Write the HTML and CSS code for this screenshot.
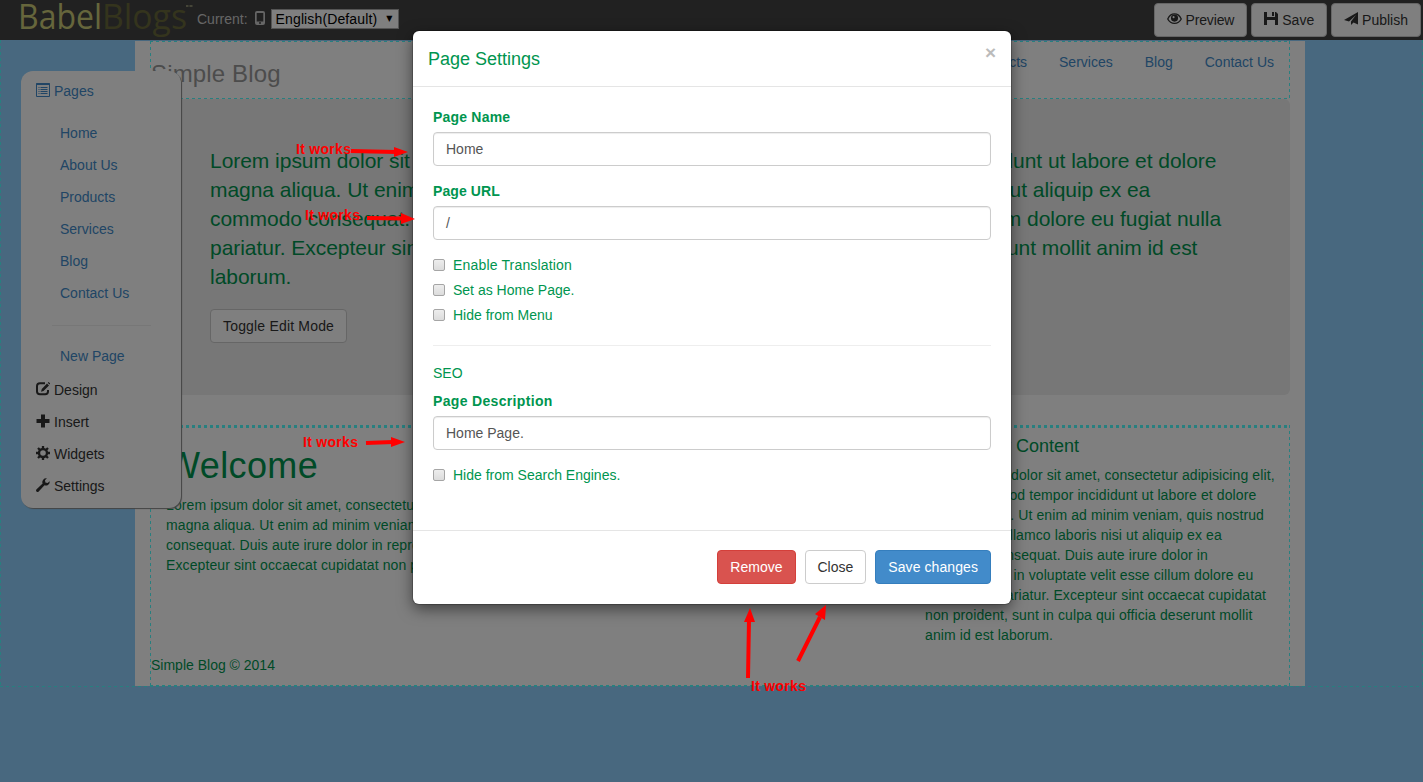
FILE: index.html
```html
<!DOCTYPE html>
<html lang="en">
<head>
<meta charset="utf-8">
<title>BabelBlogs</title>
<link rel="stylesheet" href="styles.css">
</head>
<body>
<header class="topbar">
  <svg class="logo" width="176" height="40" viewBox="0 0 176 40">
    <text class="logo-a" x="-2" y="29" textLength="84" lengthAdjust="spacingAndGlyphs">Babel</text>
    <text class="logo-b" x="82" y="29" textLength="85" lengthAdjust="spacingAndGlyphs">Blogs</text>
    <path d="M166 6h2.500M169.500 6h3" stroke="#8a8a70" stroke-width="2"/>
  </svg>
  <span class="current">Current:</span>
  <svg class="phone" width="10" height="14" viewBox="0 0 10 14"><path fill="#ccc" fill-rule="evenodd" d="M2 0h6a2 2 0 0 1 2 2v10a2 2 0 0 1-2 2H2a2 2 0 0 1-2-2V2a2 2 0 0 1 2-2zM1.700 2v8.500h6.600V2zM4 11.300v1.400h2v-1.400z"/></svg>
  <div class="lang">English(Default)<span class="caret">▼</span></div>
  <div class="actions">
    <a class="btn preview"><svg width="15" height="14" viewBox="0 0 16 14"><path d="M.8 7C4-.2 12-.2 15.200 7 12 13.200 4 13.200.8 7z" fill="none" stroke="#333" stroke-width="1.400"/><circle cx="8" cy="6" r="3.800" fill="#333"/><circle cx="7" cy="5" r="1.100" fill="#fff"/></svg> Preview</a>
    <a class="btn"><svg width="14" height="14" viewBox="0 0 14 14"><path fill="#333" d="M0 0h3v5h8V0h1l2 2v11h-3V8H3v5H0zM8 0h2v4H8z"/></svg> Save</a>
    <a class="btn"><svg width="14" height="14" viewBox="0 0 14 14"><path fill="#333" fill-rule="evenodd" d="M14 0v12.500L9.500 10.500 7 13V9.500L12 3 5 9.500 0 8z"/></svg> Publish</a>
  </div>
</header>

<main class="page">
  <div class="container">
    <div class="site-head dashed">
      <div class="brand">Simple Blog</div>
      <nav class="nav"><a>Home</a><a>About Us</a><a>Products</a><a>Services</a><a>Blog</a><a>Contact Us</a></nav>
    </div>
    <section class="jumbo">
      <p>Lorem ipsum dolor sit amet, consectetur adipisicing elit, sed do eiusmod tempor incididunt ut labore et dolore<br>magna aliqua. Ut enim ad minim veniam, quis nostrud exercitation ullamco laboris nisi ut aliquip ex ea<br>commodo consequat. Duis aute irure dolor in reprehenderit in voluptate velit esse cillum dolore eu fugiat nulla<br>pariatur. Excepteur sint occaecat cupidatat non proident, sunt in culpa qui officia deserunt mollit anim id est<br>laborum.</p>
      <a class="btn">Toggle Edit Mode</a>
    </section>
    <section class="content dashed">
      <div class="columns">
        <article class="col-main">
          <h1>Welcome</h1>
          <p>Lorem ipsum dolor sit amet, consectetur adipisicing elit, sed do eiusmod tempor incididunt ut labore et dolore<br>magna aliqua. Ut enim ad minim veniam, quis nostrud exercitation ullamco laboris nisi ut aliquip ex ea commodo<br>consequat. Duis aute irure dolor in reprehenderit in voluptate velit esse cillum dolore eu fugiat nulla pariatur.<br>Excepteur sint occaecat cupidatat non proident, sunt in culpa qui officia deserunt mollit anim id est laborum.</p>
        </article>
        <aside class="col-side">
          <h4>Secondary Content</h4>
          <p>Lorem ipsum dolor sit amet, consectetur adipisicing elit,<br>sed do eiusmod tempor incididunt ut labore et dolore<br>magna aliqua. Ut enim ad minim veniam, quis nostrud<br>exercitation ullamco laboris nisi ut aliquip ex ea<br>commodo consequat. Duis aute irure dolor in<br>reprehenderit in voluptate velit esse cillum dolore eu<br>fugiat nulla pariatur. Excepteur sint occaecat cupidatat<br>non proident, sunt in culpa qui officia deserunt mollit<br>anim id est laborum.</p>
        </aside>
      </div>
      <footer>Simple Blog © 2014</footer>
    </section>
  </div>
</main>

<aside class="panel">
  <a class="item link"><svg width="14" height="14" viewBox="0 0 14 14"><path d="M.5 .5h13v13H.5z" fill="none" stroke="#428bca"/><path d="M.5 1h13" stroke="#428bca" stroke-width="2"/><path d="M2.500 4.500h1m1 0h7m-9 2h1m1 0h7m-9 2h1m1 0h7m-9 2h1m1 0h7" stroke="#428bca"/></svg>Pages</a>
  <div class="sub">
    <a>Home</a><a>About Us</a><a>Products</a><a>Services</a><a>Blog</a><a>Contact Us</a>
  </div>
  <hr>
  <div class="sub new"><a>New Page</a></div>
  <a class="item"><svg width="14" height="14" viewBox="0 0 14 14"><path d="M9 1.200H4Q1 1.200 1 4v5.500q0 2.700 3 2.700h5.200q2.800 0 2.800-2.700V8" fill="none" stroke="#333" stroke-width="2"/><path fill="#333" d="M11 1.500l2 2L7.500 9 5 9.800 5.800 7zM11.800.8l.8-.8 1.600 1.500-.8.900z"/></svg>Design</a>
  <a class="item"><svg width="14" height="14" viewBox="0 0 14 14"><path fill="#333" d="M5 .5h4V5h4.500v4H9v4.500H5V9H.5V5H5z"/></svg>Insert</a>
  <a class="item"><svg width="14" height="14" viewBox="0 0 14 14"><circle cx="7" cy="7" r="4" fill="none" stroke="#333" stroke-width="2.400"/><path d="M7 0v2.500M7 11.500V14M0 7h2.500M11.500 7H14M2 2l2 2M10 10l2 2M12 2l-2 2M4 10l-2 2" stroke="#333" stroke-width="2.300"/></svg>Widgets</a>
  <a class="item"><svg width="14" height="14" viewBox="0 0 14 14"><path fill="#333" d="M13.700 3.200A3.900 3.900 0 0 1 8.500 7.300L2.700 13.400Q1.500 14.400.5 13.400T.6 11.300L6.600 5.600A3.900 3.900 0 0 1 10.900.3L9 2.300l.4 2.200 2.200.5z"/></svg>Settings</a>
</aside>

<div class="backdrop">
  <div class="modal">
    <div class="modal-head"><h4>Page Settings</h4><span class="x">×</span></div>
    <div class="modal-body">
      <label>Page Name</label>
      <div class="input">Home</div>
      <label class="tight">Page URL</label>
      <div class="input">/</div>
      <div class="check wide"><i></i>Enable Translation</div>
      <div class="check"><i></i>Set as Home Page.</div>
      <div class="check"><i></i>Hide from Menu</div>
      <hr>
      <div class="seo">SEO</div>
      <label class="loose">Page Description</label>
      <div class="input">Home Page.</div>
      <div class="check"><i></i>Hide from Search Engines.</div>
    </div>
    <div class="modal-foot">
      <a class="btn danger">Remove</a><a class="btn">Close</a><a class="btn primary">Save changes</a>
    </div>
  </div>
</div>

<svg class="notes" width="1423" height="782" viewBox="0 0 1423 782">
  <g stroke="#f00" stroke-width="4">
    <path d="M351 151L396 152M367 218L403 218.500M366 443L393 442M748 678L749 620M798 661L820 617"/>
  </g>
  <path fill="#f00" d="M394 147l14 5-14 5zM401 213l14 6-14 5zM391 437l14 5-14 5zM744 622l6-14 5 14zM815 614l11-9-1 15z"/>
  <g class="note">
    <text x="296" y="154" textLength="55">It works</text>
    <text x="305" y="220" textLength="55">It works</text>
    <text x="303" y="447" textLength="55">It works</text>
    <text x="751" y="691" textLength="55">It works</text>
  </g>
</svg>
</body>
</html>
```

FILE: styles.css
```css
* { box-sizing: border-box; }
body {
  margin: 0;
  height: 782px;
  overflow: hidden;
  background: #90d0fe;
  color: #00954f;
  font: 14px/20px "Liberation Sans", Arial, sans-serif;
}
h1, h4, p { margin: 0; font-weight: 400; }
hr { margin: 0; border: 0; border-top: 1px solid #eee; }

.topbar {
  height: 40px;
  padding: 0 2px 0 20px;
  display: flex;
  align-items: flex-start;
  background: #424242;
}
.logo { flex: none; font: 400 34px "Open Sans", sans-serif; overflow: visible; }
.logo-a { fill: #cccc78; }
.logo-b { fill: #68683a; }
.current { margin: 9px 7px 0 1px; color: #ccc; }
.phone { margin: 11px 6px 0 0; }
.lang {
  width: 128px;
  height: 20px;
  margin-top: 9px;
  padding-left: 4px;
  border: 1px solid #a9a9a9;
  background: #fff;
  color: #000;
  line-height: 19px;
  letter-spacing: .13px;
  display: flex;
  justify-content: space-between;
}
.caret { margin-right: 5px; font: 8px/18px "DejaVu Sans", sans-serif; }
.actions { margin: 3px 0 0 auto; display: flex; gap: 4px; }
.actions svg { margin-bottom: -1px; }
.preview { letter-spacing: -.12px; }

.btn {
  display: inline-block;
  height: 34px;
  padding: 6px 12px;
  border: 1px solid #ccc;
  border-radius: 4px;
  background: #fff;
  color: #333;
  white-space: nowrap;
}
.danger { background: #d9534f; border-color: #d43f3a; color: #fff; }
.primary { background: #428bca; border-color: #357ebd; color: #fff; letter-spacing: .08px; }

/* Editable-region outlines: 3px on, 3px off */
.page, .dashed {
  --t: 1px;
  --h: repeating-linear-gradient(90deg, #50ffff 0 3px, transparent 3px 6px);
  --v: repeating-linear-gradient(#50ffff 0 3px, transparent 3px 6px);
  padding: var(--t) 1px 1px;
  background:
    var(--h) 0 0 / 100% var(--t) no-repeat,
    var(--h) 0 100% / 100% 1px no-repeat,
    var(--v) 0 0 / 1px 100% no-repeat,
    var(--v) 100% 0 / 1px 100% no-repeat;
}
.page { height: 647px; --t: 0px; padding-top: 1px; }
.container { width: 1170px; height: 645px; margin-left: 134px; padding: 0 15px; background: #fff; }
.site-head {
  height: 58px;
  display: flex;
  justify-content: space-between;
}
.brand { padding-top: 22px; font-size: 24px; letter-spacing: .15px; color: #999; }
.nav { display: flex; padding: 10px 0; }
.nav a { padding: 0 15px; margin-left: 2px; color: #428bca; }
.jumbo {
  height: 296px;
  padding: 47px 60px;
  border-radius: 6px;
  background: #eee;
}
.jumbo p { margin-bottom: 18px; font-size: 21px; line-height: 29px; letter-spacing: -.04px; white-space: nowrap; }
.jumbo .btn { letter-spacing: .18px; }
.content {
  --t: 3px;
  height: 261px;
  margin-top: 30px;
  display: flex;
  flex-direction: column;
}
.columns { display: flex; height: 227px; }
.columns p { white-space: nowrap; letter-spacing: .1px; }
.col-main { width: 759px; padding-left: 15px; }
.col-main h1 { margin: 18px 0 9px; font-size: 36px; line-height: 40px; letter-spacing: .4px; }
.col-side { padding: 8px 0 0 15px; }
.col-side h4 { margin-bottom: 9px; font-size: 18px; }

.panel {
  position: absolute;
  left: 21px;
  top: 71px;
  width: 160px;
  height: 437px;
  padding-top: 10px;
  border-radius: 12px;
  background: #fff;
  box-shadow: 1px 1px 1px #888;
}
.item { display: flex; padding-left: 15px; margin-bottom: 12px; color: #333; }
.item svg { margin: 2px 4px 0 0; }
.link, .sub { color: #428bca; }
.link { margin-bottom: 22px; }
.sub { display: flex; flex-direction: column; gap: 12px; padding-left: 39px; }
.panel hr { margin: 22px 30px 20px 31px; }
.new { margin-bottom: 14px; }

.backdrop {
  position: absolute;
  inset: 0;
  padding-top: 31px;
  background: rgba(0, 0, 0, .5);
}
.modal {
  width: 598px;
  height: 573px;
  margin-left: 413px;
  border-radius: 6px;
  background: #fff;
  box-shadow: 0 5px 15px rgba(0, 0, 0, .5), 0 0 0 1px rgba(0, 0, 0, .2);
}
.modal-head {
  height: 56px;
  padding: 18px 15px 0;
  border-bottom: 1px solid #e5e5e5;
  display: flex;
  justify-content: space-between;
}
.modal-head h4 { font-size: 18px; }
.x { margin-top: -6px; font: bold 19px/20px "Liberation Sans", Arial, sans-serif; color: #bbb; }
.modal-body { height: 443px; padding: 20px; }
.modal-body label { display: block; margin-bottom: 5px; font-weight: 700; letter-spacing: .2px; }
.modal-body .tight { letter-spacing: .1px; }
.modal-body .loose { letter-spacing: .33px; }
.input {
  height: 34px;
  margin-bottom: 15px;
  padding: 6px 12px;
  border: 1px solid #ccc;
  border-radius: 4px;
  color: #555;
  box-shadow: inset 0 1px 1px rgba(0, 0, 0, .075);
}
.check { display: flex; align-items: center; margin-bottom: 5px; }
.wide { letter-spacing: .17px; }
.check i {
  width: 12px;
  height: 12px;
  margin-right: 8px;
  border: 1px solid #a5a5a5;
  border-radius: 2px;
  background: linear-gradient(#ededed, #dcdcdc);
}
.modal-body hr { margin: 20px 0 17px; }
.seo { margin-bottom: 8px; }
.modal-foot {
  padding: 19px 20px;
  border-top: 1px solid #e5e5e5;
  display: flex;
  justify-content: flex-end;
  gap: 9px;
}

.notes { position: absolute; left: 0; top: 0; }
.note { font: bold 14px "Liberation Sans", Arial, sans-serif; fill: #f00; }
```
